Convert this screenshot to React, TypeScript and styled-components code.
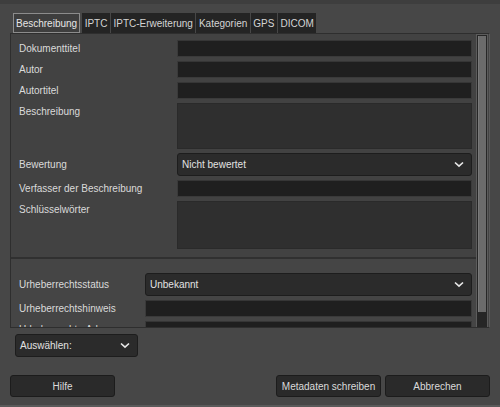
import React from 'react';
import styled, {createGlobalStyle} from 'styled-components';

const GlobalStyle = createGlobalStyle`
  html, body {
    margin: 0;
    padding: 0;
    background: #474747;
  }
  body {
    font-family: "Liberation Sans", Arial, sans-serif;
    font-size: 10px;
    color: #dadada;
  }
`

const Window = styled.div`
  width: 500px;
  height: 407px;
  background: #474747;
  display: flex;
  flex-direction: column;
  overflow: hidden;
  box-sizing: border-box;
  border-bottom: 2px solid #5a5a5a;
`

const TopStrip = styled.div`
  height: 4px;
  background: #3e3e3e;
`

const Body = styled.div`
  display: flex;
  flex-direction: column;
  padding: 0 10px;
`

const TabBar = styled.div`
  display: flex;
  margin-top: 9px;
  height: 20px;
  padding-left: 3px;
`

const Tab = styled.div<{ $active?: boolean }>`
  height: 20px;
  box-sizing: border-box;
  display: flex;
  align-items: center;
  padding: 0 ${p => p.$active ? 2 : 1.5}px;
  margin-right: ${p => p.$active ? 2 : 1}px;
  background: ${p => p.$active ? '#3e3e3e' : '#242424'};
  border: 1px solid ${p => p.$active ? '#8c8c8c' : '#242424'};
  color: ${p => p.$active ? '#e6e6e6' : '#d4d4d4'};
  white-space: nowrap;
`

const Panel = styled.div`
  height: 295px;
  box-sizing: border-box;
  border: 1px solid #2e2e2e;
  border-right-color: #5a5a5a;
  display: flex;
  background: #434343;
`

const ScrollArea = styled.div`
  flex: 1;
  overflow: hidden;
  display: flex;
  flex-direction: column;
`

const Scrollbar = styled.div`
  width: 12px;
  box-sizing: border-box;
  margin: 0 1px 0 0;
  background: #262626;
  border: 1px solid #5c5c5c;
  border-bottom: none;
  padding: 1px 1px 0 1px;
  display: flex;
  flex-direction: column;
`

const Thumb = styled.div`
  height: 276px;
  background: #6b6b6b;
  border-left: 1px solid #7a7a7a;
`

const Group = styled.div<{ $labelWidth: number, $first?: boolean }>`
  display: grid;
  grid-template-columns: ${p => p.$labelWidth}px 1fr;
  row-gap: 4px;
  padding: ${p => p.$first ? '6px 4px 8px 8px' : '14px 4px 0 8px'};
  border-bottom: ${p => p.$first ? '2px solid #303030' : 'none'};
  background: ${p => p.$first ? '#424242' : '#454545'};
`

const Label = styled.div<{ $center?: boolean }>`
  line-height: 17px;
  align-self: ${p => p.$center ? 'center' : 'start'};
  white-space: nowrap;
`

const Field = styled.div`
  height: 17px;
  box-sizing: border-box;
  background: #1f1f1f;
  border: 1px solid #3a3a3a;
  border-top-color: #363636;
`

const TextArea = styled.div<{ $h: number }>`
  height: ${p => p.$h}px;
  box-sizing: border-box;
  background: #2f2f2f;
  border: 1px solid #2a2a2a;
`

const ComboBox = styled.div<{ $width?: number }>`
  height: 23px;
  box-sizing: border-box;
  width: ${p => p.$width ? `${p.$width}px` : 'auto'};
  background: #2b2b2b;
  border: 1px solid #1d1d1d;
  border-radius: 3px;
  display: flex;
  align-items: center;
  justify-content: space-between;
  padding: 0 7px 0 4px;
  color: #e2e2e2;
`

const Chevron = () => (
    <svg width="10" height="7" viewBox="0 0 10 7">
        <path d="M1 1.5 L5 5.2 L9 1.5" fill="none" stroke="#e8e8e8" strokeWidth="1.6"/>
    </svg>
)

const SelectRow = styled.div`
  margin-top: 6px;
  margin-left: 5px;
`

const ButtonRow = styled.div`
  display: flex;
  margin-top: 18px;
  gap: 4px;
`

const Button = styled.div<{ $width: number }>`
  width: ${p => p.$width}px;
  height: 22px;
  box-sizing: border-box;
  background: #2a2a2a;
  border: 1px solid #1c1c1c;
  border-radius: 3px;
  display: flex;
  align-items: center;
  justify-content: center;
  color: #dadada;
`

const Spacer = styled.div`
  flex: 1;
`

const tabs = ['Beschreibung', 'IPTC', 'IPTC-Erweiterung', 'Kategorien', 'GPS', 'DICOM'];

export default function App() {
    return (
        <>
            <GlobalStyle/>
            <Window>
                <TopStrip/>
                <Body>
                    <TabBar>
                        {tabs.map((t, i) => <Tab key={t} $active={i === 0}>{t}</Tab>)}
                    </TabBar>
                    <Panel>
                        <ScrollArea>
                            <Group $labelWidth={158} $first>
                                <Label>Dokumenttitel</Label>
                                <Field/>
                                <Label>Autor</Label>
                                <Field/>
                                <Label>Autortitel</Label>
                                <Field/>
                                <Label>Beschreibung</Label>
                                <TextArea $h={46}/>
                                <Label $center>Bewertung</Label>
                                <ComboBox>Nicht bewertet<Chevron/></ComboBox>
                                <Label>Verfasser der Beschreibung</Label>
                                <Field/>
                                <Label>Schlüsselwörter</Label>
                                <TextArea $h={48}/>
                            </Group>
                            <Group $labelWidth={126}>
                                <Label $center>Urheberrechtsstatus</Label>
                                <ComboBox>Unbekannt<Chevron/></ComboBox>
                                <Label>Urheberrechtshinweis</Label>
                                <Field/>
                                <Label>Urheberrechts-Adresse</Label>
                                <Field/>
                            </Group>
                        </ScrollArea>
                        <Scrollbar>
                            <Thumb/>
                        </Scrollbar>
                    </Panel>
                    <SelectRow>
                        <ComboBox $width={123}>Auswählen:<Chevron/></ComboBox>
                    </SelectRow>
                    <ButtonRow>
                        <Button $width={105}>Hilfe</Button>
                        <Spacer/>
                        <Button $width={105}>Metadaten schreiben</Button>
                        <Button $width={105}>Abbrechen</Button>
                    </ButtonRow>
                </Body>
            </Window>
        </>
    );
}
